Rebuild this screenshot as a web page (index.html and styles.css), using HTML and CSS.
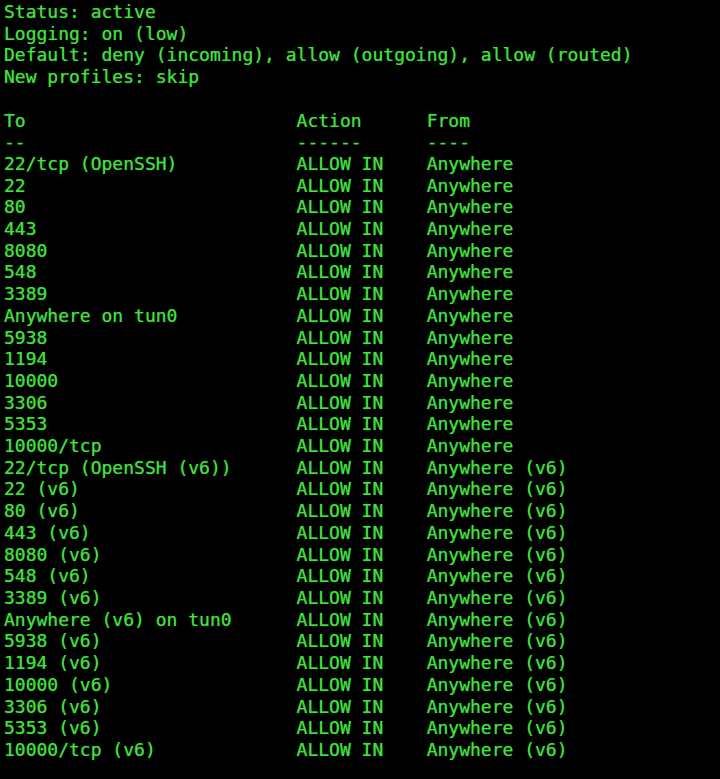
FILE: index.html
```html
<!DOCTYPE html>
<html>
<head>
<meta charset="utf-8">
<link rel="stylesheet" href="styles.css">
</head>
<body>
<pre class="term">Status: active
Logging: on (low)
Default: deny (incoming), allow (outgoing), allow (routed)
New profiles: skip

To                         Action      From
--                         ------      ----
22/tcp (OpenSSH)           ALLOW IN    Anywhere
22                         ALLOW IN    Anywhere
80                         ALLOW IN    Anywhere
443                        ALLOW IN    Anywhere
8080                       ALLOW IN    Anywhere
548                        ALLOW IN    Anywhere
3389                       ALLOW IN    Anywhere
Anywhere on tun0           ALLOW IN    Anywhere
5938                       ALLOW IN    Anywhere
1194                       ALLOW IN    Anywhere
10000                      ALLOW IN    Anywhere
3306                       ALLOW IN    Anywhere
5353                       ALLOW IN    Anywhere
10000/tcp                  ALLOW IN    Anywhere
22/tcp (OpenSSH (v6))      ALLOW IN    Anywhere (v6)
22 (v6)                    ALLOW IN    Anywhere (v6)
80 (v6)                    ALLOW IN    Anywhere (v6)
443 (v6)                   ALLOW IN    Anywhere (v6)
8080 (v6)                  ALLOW IN    Anywhere (v6)
548 (v6)                   ALLOW IN    Anywhere (v6)
3389 (v6)                  ALLOW IN    Anywhere (v6)
Anywhere (v6) on tun0      ALLOW IN    Anywhere (v6)
5938 (v6)                  ALLOW IN    Anywhere (v6)
1194 (v6)                  ALLOW IN    Anywhere (v6)
10000 (v6)                 ALLOW IN    Anywhere (v6)
3306 (v6)                  ALLOW IN    Anywhere (v6)
5353 (v6)                  ALLOW IN    Anywhere (v6)
10000/tcp (v6)             ALLOW IN    Anywhere (v6)</pre>
</body>
</html>
```
FILE: styles.css
```css
html, body {
  margin: 0;
  padding: 0;
  background: #000;
  height: 100%;
}
.term {
  margin: 0;
  padding: 1px 0 0 4px;
  font-family: "DejaVu Sans Mono", "Liberation Mono", monospace;
  font-size: 18px;
  line-height: 21.7px;
  color: #40e23c;
  text-shadow: 0 0 1px rgba(64, 226, 60, 0.7);
  white-space: pre;
}
```
